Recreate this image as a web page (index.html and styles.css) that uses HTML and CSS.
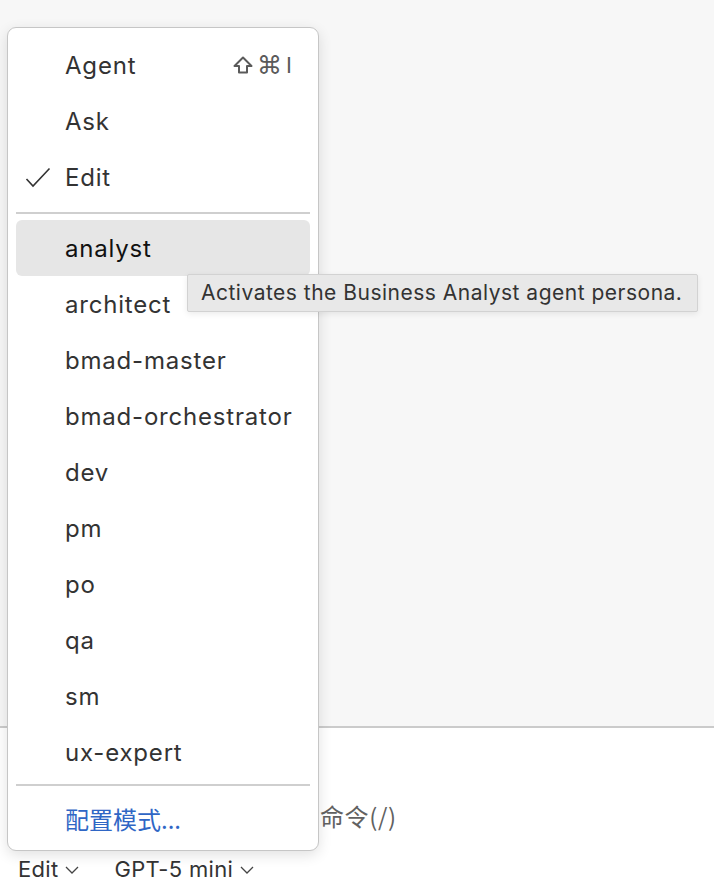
FILE: index.html
```html
<!DOCTYPE html>
<html lang="zh">
<head>
<meta charset="utf-8">
<title>Mode picker</title>
<link rel="stylesheet" href="styles.css">
</head>
<body>
<div class="page">
  <div class="chat-area"></div>
  <div class="input-area">
    <div class="placeholder">命令(/)</div>
    <div class="toolbar">
      <span class="pick">Edit<svg class="chev" viewBox="0 0 14 8" width="14" height="8"><polyline points="1,1 7,7 13,1"/></svg></span>
      <span class="pick">GPT-5 mini<svg class="chev" viewBox="0 0 14 8" width="14" height="8"><polyline points="1,1 7,7 13,1"/></svg></span>
    </div>
  </div>

  <div class="menu">
    <div class="item"><span class="check"></span><span class="label">Agent</span><span class="kbd"><svg class="shift" viewBox="0 0 20 20" width="20" height="20"><path d="M10 2.5 L18.5 11 H14 V17.5 H6 V11 H1.5 Z"/></svg><span class="cmd">⌘</span><span class="key">I</span></span></div>
    <div class="item"><span class="check"></span><span class="label">Ask</span></div>
    <div class="item"><span class="check"><svg viewBox="0 0 26 22" width="26" height="22"><polyline points="1.5,12 8,19 24.5,1.5"/></svg></span><span class="label">Edit</span></div>
    <div class="sep"></div>
    <div class="item active"><span class="check"></span><span class="label">analyst</span></div>
    <div class="item"><span class="check"></span><span class="label">architect</span></div>
    <div class="item"><span class="check"></span><span class="label">bmad-master</span></div>
    <div class="item"><span class="check"></span><span class="label">bmad-orchestrator</span></div>
    <div class="item"><span class="check"></span><span class="label">dev</span></div>
    <div class="item"><span class="check"></span><span class="label">pm</span></div>
    <div class="item"><span class="check"></span><span class="label">po</span></div>
    <div class="item"><span class="check"></span><span class="label">qa</span></div>
    <div class="item"><span class="check"></span><span class="label">sm</span></div>
    <div class="item"><span class="check"></span><span class="label">ux-expert</span></div>
    <div class="sep sep-small"></div>
    <div class="item link"><span class="check"></span><span class="label">配置模式...</span></div>
  </div>

  <div class="tooltip">Activates the Business Analyst agent persona.</div>
</div>
</body>
</html>
```

FILE: styles.css
```css
* { box-sizing: border-box; }
html, body { margin: 0; padding: 0; }
body {
  font-family: Inter, "Noto Sans", "Noto Sans CJK SC", sans-serif;
  color: #333;
  background: #ffffff;
}
.page {
  position: relative;
  width: 714px;
  height: 882px;
  overflow: hidden;
  display: flex;
  flex-direction: column;
}
.chat-area {
  height: 728px;
  background: #f7f7f7;
  border-bottom: 2px solid #cbcbcb;
  flex: none;
}
.input-area {
  flex: 1;
  background: #fff;
  display: flex;
  flex-direction: column;
}
.placeholder {
  margin-top: 74px;
  padding-left: 320px;
  font-size: 24px;
  line-height: 28px;
  letter-spacing: 0.6px;
  color: #616161;
  white-space: nowrap;
  font-family: "Noto Sans CJK SC", sans-serif;
}
.toolbar {
  margin-top: 29px;
  padding-left: 18px;
  display: flex;
  gap: 35px;
  font-size: 22px;
  line-height: 20px;
  letter-spacing: 0.3px;
  color: #333;
  flex: none;
}
.pick { display: inline-flex; align-items: center; gap: 7px; white-space: nowrap; }
.chev { fill: none; stroke: #444; stroke-width: 1.3; margin-top: 2px; }

.menu {
  position: absolute;
  left: 7px;
  top: 27px;
  width: 312px;
  height: 824px;
  background: #fff;
  border: 1.5px solid #c6c6c6;
  border-radius: 9px;
  box-shadow: 0 4px 14px rgba(0,0,0,0.12);
  padding: 9px 8px 4px;
  display: flex;
  flex-direction: column;
}
.item {
  height: 56px;
  flex: none;
  display: flex;
  align-items: center;
  border-radius: 6px;
  font-size: 24px;
  letter-spacing: 0.8px;
  color: #333;
}
.item.active { background: #e6e6e6; color: #111; }
.check {
  width: 49px;
  flex: none;
  display: flex;
  justify-content: flex-end;
  padding-right: 14px;
  padding-top: 2px;
}
.check svg { fill: none; stroke: #333; stroke-width: 1.6; }
.label { flex: 1; white-space: nowrap; }
.kbd {
  display: flex;
  align-items: center;
  gap: 4px;
  color: #5a5a5a;
  padding-right: 18px;
  letter-spacing: 0;
}
.shift { fill: none; stroke: #5a5a5a; stroke-width: 2; stroke-linejoin: round; }
.cmd { font-family: "DejaVu Sans", sans-serif; font-size: 25px; line-height: 1; }
.key { font-size: 22px; line-height: 1; font-weight: 400; }
.link { color: #2f66c5; }
.link .label { font-family: "Noto Sans CJK SC", sans-serif; font-size: 24px; letter-spacing: 0; }
.sep {
  height: 15px;
  flex: none;
  display: flex;
  align-items: center;
}
.sep-small { height: 10px; }
.sep::before {
  content: "";
  display: block;
  width: 100%;
  height: 2px;
  background: #cfcfcf;
}

.tooltip {
  position: absolute;
  left: 187px;
  top: 274px;
  width: 511px;
  height: 38px;
  background: #e8e8e8;
  border: 1px solid #d2d2d2;
  border-radius: 2px;
  box-shadow: 0 2px 6px rgba(0,0,0,0.08);
  font-size: 21px;
  line-height: 36px;
  letter-spacing: 0.5px;
  padding-left: 13px;
  color: #333;
  white-space: nowrap;
}
```
